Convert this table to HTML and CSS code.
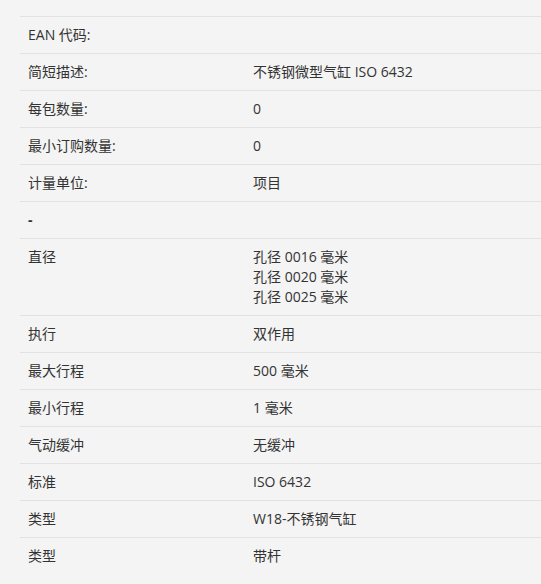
FILE: index.html
```html
<!DOCTYPE html>
<html lang="zh">
<head>
  <meta charset="UTF-8" />
  <meta name="viewport" content="width=device-width, initial-scale=1" />
  <title>产品属性</title>
  <link rel="stylesheet" href="styles.css">
</head>
<body>
  <div class="container">
    <div class="specs">
      <div class="row"><div class="label">EAN 代码:</div><div class="value"></div></div>
      <div class="row"><div class="label">简短描述:</div><div class="value">不锈钢微型气缸 ISO 6432</div></div>
      <div class="row"><div class="label">每包数量:</div><div class="value">0</div></div>
      <div class="row"><div class="label">最小订购数量:</div><div class="value">0</div></div>
      <div class="row"><div class="label">计量单位:</div><div class="value">项目</div></div>
      <div class="row"><div class="label group">-</div><div class="value"></div></div>
      <div class="row">
        <div class="label">直径</div>
        <div class="value">孔径 0016 毫米<br>孔径 0020 毫米<br>孔径 0025 毫米</div>
      </div>
      <div class="row"><div class="label">执行</div><div class="value">双作用</div></div>
      <div class="row"><div class="label">最大行程</div><div class="value">500 毫米</div></div>
      <div class="row"><div class="label">最小行程</div><div class="value">1 毫米</div></div>
      <div class="row"><div class="label">气动缓冲</div><div class="value">无缓冲</div></div>
      <div class="row"><div class="label">标准</div><div class="value">ISO 6432</div></div>
      <div class="row"><div class="label">类型</div><div class="value">W18-不锈钢气缸</div></div>
      <div class="row last"><div class="label">类型</div><div class="value">带杆</div></div>
    </div>
  </div>
</body>
</html>
```

FILE: styles.css
```css
body {
  margin: 0;
  background: #f4f4f4;
  color: #333;
  font-family: 'Open Sans', 'Noto Sans CJK SC', sans-serif;
  font-size: 14px;
  line-height: 20px;
}
.container {
  padding: 16px 0 0 20px;
}
.specs {
  border-top: 1px solid #e2e2e2;
}
.row {
  display: grid;
  grid-template-columns: 225px 1fr;
  border-bottom: 1px solid #e2e2e2;
}
.row.last {
  border-bottom: none;
}
.label, .value {
  padding: 8px 8px;
  min-height: 20px;
}
.group {
  font-weight: bold;
}
```
